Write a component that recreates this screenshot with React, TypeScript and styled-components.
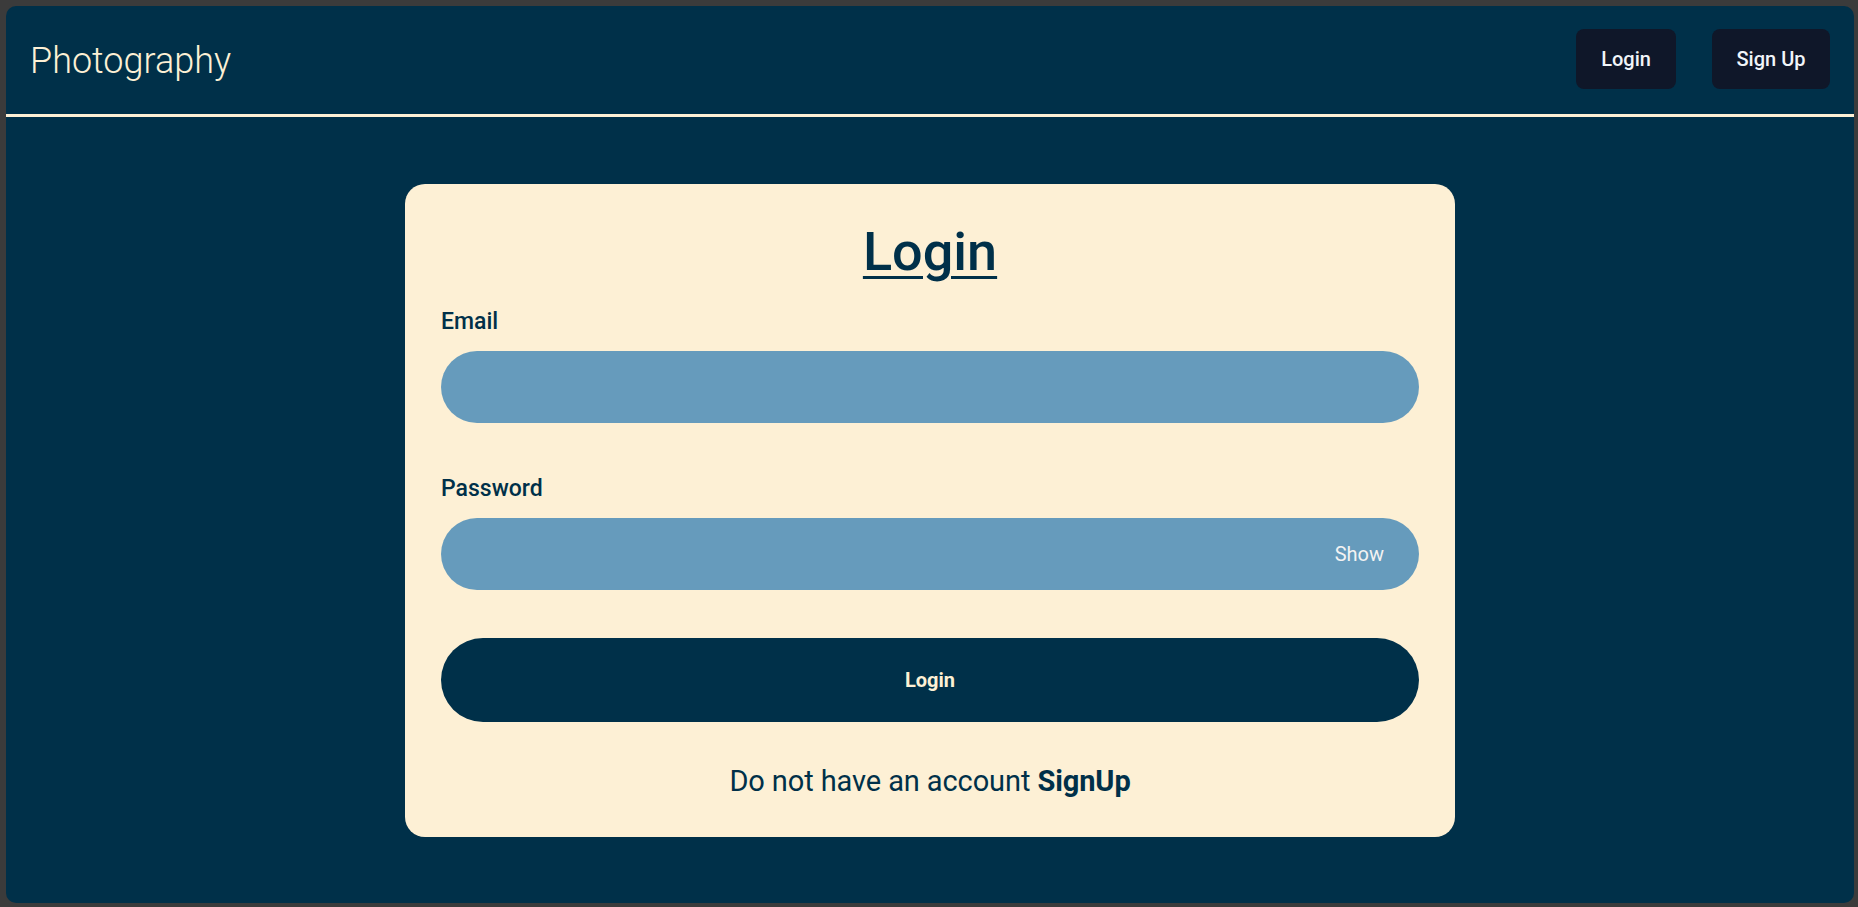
import React, { useState } from "react";
import styled, { createGlobalStyle } from "styled-components";

const GlobalStyle = createGlobalStyle`
  * { box-sizing: border-box; }
  html, body { margin: 0; padding: 0; background: #3b3b3b; }
  body { font-family: Roboto, "Liberation Sans", sans-serif; }
  #root { padding: 6px 4px 4px 6px; }
`;

const Frame = styled.div`
  width: 1848px;
  height: 897px;
  background: #003049;
  border-radius: 10px;
  overflow: hidden;
  display: flex;
  flex-direction: column;
`;

const Header = styled.header`
  height: 111px;
  flex: none;
  display: flex;
  align-items: center;
  justify-content: space-between;
  padding: 0 24px 3px 24px;
  border-bottom: 3px solid #fdf0d5;
`;

const Brand = styled.div`
  color: #fdf0d5;
  font-size: 36px;
  font-weight: 300;
  margin-top: 4px;
`;

const Nav = styled.nav`
  display: flex;
  gap: 36px;
`;

const NavButton = styled.button<{ $w: number }>`
  width: ${(p) => p.$w}px;
  height: 60px;
  border: none;
  border-radius: 8px;
  background: #0f1729;
  color: #f1f5f9;
  font-family: Roboto, sans-serif;
  font-size: 20px;
  font-weight: 500;
  cursor: pointer;
`;

const Main = styled.main`
  flex: 1;
  display: flex;
  align-items: center;
  justify-content: center;
`;

const Card = styled.form`
  width: 1050px;
  background: #fdf0d5;
  border-radius: 20px;
  padding: 36px 36px 38px 36px;
  display: flex;
  flex-direction: column;
  color: #003049;
`;

const Title = styled.h1`
  margin: 0 0 24px;
  text-align: center;
  font-size: 54px;
  line-height: 64px;
  font-weight: 500;
  text-decoration: underline;
  text-decoration-thickness: 3px;
  text-underline-offset: 6px;
`;

const Label = styled.label<{ $top?: number }>`
  display: block;
  font-size: 23px;
  line-height: 28px;
  font-weight: 500;
  margin: ${(p) => p.$top ?? 0}px 0 15px;
`;

const Field = styled.div`
  position: relative;
  height: 72px;
  width: 978px;
`;

const Input = styled.input`
  width: 100%;
  height: 100%;
  border: none;
  outline: none;
  border-radius: 36px;
  background: #669bbc;
  padding: 0 100px 0 32px;
  font-size: 20px;
  color: #fdf0d5;
  font-family: Roboto, sans-serif;
`;

const ShowToggle = styled.span`
  position: absolute;
  right: 35px;
  top: 50%;
  transform: translateY(-50%);
  color: #f3f3f3;
  font-size: 20px;
  cursor: pointer;
`;

const Submit = styled.button`
  margin-top: 48px;
  width: 978px;
  height: 84px;
  border: none;
  border-radius: 42px;
  background: #003049;
  color: #fdf0d5;
  font-family: Roboto, sans-serif;
  font-size: 20px;
  font-weight: 700;
  cursor: pointer;
`;

const Footer = styled.p`
  margin: 41px 0 0;
  text-align: center;
  font-size: 29px;
  line-height: 36px;
  font-weight: 400;
  letter-spacing: -0.1px;
`;

const Strong = styled.b`
  font-weight: 700;
`;

export default function App() {
  const [show, setShow] = useState(false);
  return (
    <>
      <GlobalStyle />
      <Frame>
        <Header>
          <Brand>Photography</Brand>
          <Nav>
            <NavButton $w={100}>Login</NavButton>
            <NavButton $w={118}>Sign Up</NavButton>
          </Nav>
        </Header>
        <Main>
          <Card onSubmit={(e) => e.preventDefault()}>
            <Title>Login</Title>
            <Label htmlFor="email">Email</Label>
            <Field>
              <Input id="email" type="email" />
            </Field>
            <Label htmlFor="password" $top={52}>
              Password
            </Label>
            <Field>
              <Input id="password" type={show ? "text" : "password"} />
              <ShowToggle onClick={() => setShow(!show)}>{show ? "Hide" : "Show"}</ShowToggle>
            </Field>
            <Submit type="submit">Login</Submit>
            <Footer>
              Do not have an account <Strong>SignUp</Strong>
            </Footer>
          </Card>
        </Main>
      </Frame>
    </>
  );
}
